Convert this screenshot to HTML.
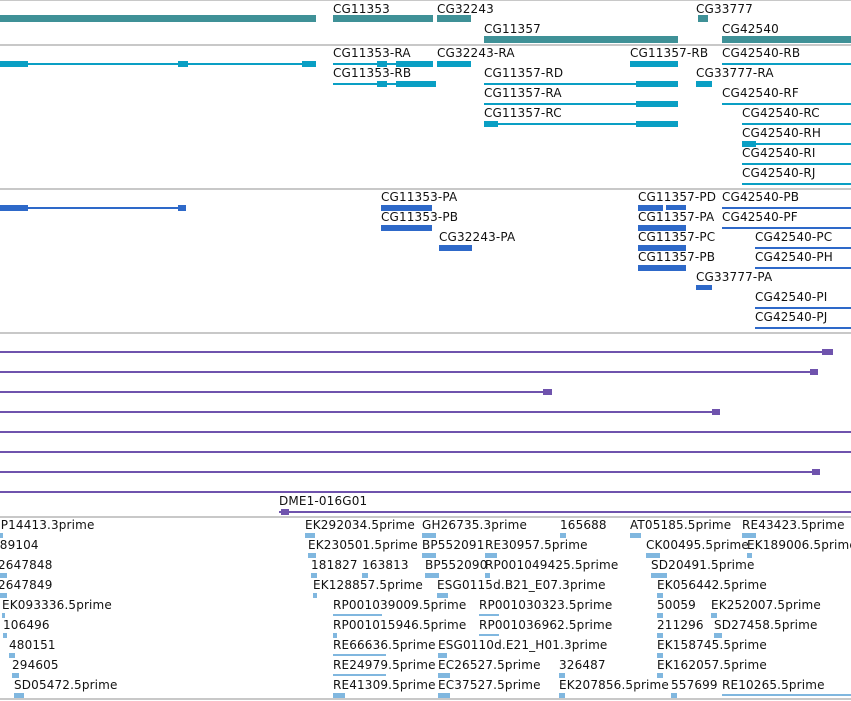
<!DOCTYPE html>
<html><head><meta charset="utf-8"><style>
body{margin:0;width:851px;height:701px;overflow:hidden;background:#fff;position:relative;font-family:"DejaVu Sans","Liberation Sans",sans-serif;}
div{position:absolute;}
.l{font-size:12px;line-height:14px;color:#111;white-space:nowrap;letter-spacing:0.15px;}
.s{left:0;width:851px;height:2px;background:#c8c8c8;}
.g{background:#3f9197;height:7px;}
.t{background:#0a9fc4;}
.p{background:#2e69c9;}
.v{background:#6f53ad;}
.e{background:#80b7df;}
</style></head><body>
<div class="s" style="top:0px;height:1px"></div>
<div class="s" style="top:44px"></div>
<div class="s" style="top:188px"></div>
<div class="s" style="top:332px"></div>
<div class="s" style="top:516px"></div>
<div class="s" style="top:698px"></div>

<div class="l" style="left:333px;top:2px">CG11353</div>
<div class="l" style="left:437px;top:2px">CG32243</div>
<div class="l" style="left:696px;top:2px">CG33777</div>
<div class="l" style="left:484px;top:22px">CG11357</div>
<div class="l" style="left:722px;top:22px">CG42540</div>
<div class="g" style="left:0;top:15px;width:316px"></div>
<div class="g" style="left:333px;top:15px;width:100px"></div>
<div class="g" style="left:437px;top:15px;width:34px"></div>
<div class="g" style="left:698px;top:15px;width:10px"></div>
<div class="g" style="left:484px;top:36px;width:194px"></div>
<div class="g" style="left:722px;top:36px;width:129px"></div>

<div class="t" style="left:0;top:61px;width:28px;height:6px"></div>
<div class="t" style="left:0;top:63px;width:316px;height:2px"></div>
<div class="t" style="left:178px;top:61px;width:10px;height:6px"></div>
<div class="t" style="left:302px;top:61px;width:14px;height:6px"></div>
<div class="l" style="left:333px;top:46px">CG11353-RA</div>
<div class="l" style="left:437px;top:46px">CG32243-RA</div>
<div class="l" style="left:630px;top:46px">CG11357-RB</div>
<div class="l" style="left:722px;top:46px">CG42540-RB</div>
<div class="t" style="left:333px;top:63px;width:100px;height:2px"></div>
<div class="t" style="left:377px;top:61px;width:10px;height:6px"></div>
<div class="t" style="left:396px;top:61px;width:37px;height:6px"></div>
<div class="t" style="left:437px;top:61px;width:34px;height:6px"></div>
<div class="t" style="left:630px;top:61px;width:48px;height:6px"></div>
<div class="t" style="left:722px;top:63px;width:129px;height:2px"></div>
<div class="l" style="left:333px;top:66px">CG11353-RB</div>
<div class="l" style="left:484px;top:66px">CG11357-RD</div>
<div class="l" style="left:696px;top:66px">CG33777-RA</div>
<div class="t" style="left:333px;top:83px;width:103px;height:2px"></div>
<div class="t" style="left:377px;top:81px;width:10px;height:6px"></div>
<div class="t" style="left:396px;top:81px;width:40px;height:6px"></div>
<div class="t" style="left:484px;top:83px;width:194px;height:2px"></div>
<div class="t" style="left:636px;top:81px;width:42px;height:6px"></div>
<div class="t" style="left:696px;top:81px;width:16px;height:6px"></div>
<div class="l" style="left:484px;top:86px">CG11357-RA</div>
<div class="l" style="left:722px;top:86px">CG42540-RF</div>
<div class="t" style="left:484px;top:103px;width:194px;height:2px"></div>
<div class="t" style="left:636px;top:101px;width:42px;height:6px"></div>
<div class="t" style="left:722px;top:103px;width:129px;height:2px"></div>
<div class="l" style="left:484px;top:106px">CG11357-RC</div>
<div class="l" style="left:742px;top:106px">CG42540-RC</div>
<div class="t" style="left:484px;top:123px;width:194px;height:2px"></div>
<div class="t" style="left:484px;top:121px;width:14px;height:6px"></div>
<div class="t" style="left:636px;top:121px;width:42px;height:6px"></div>
<div class="t" style="left:742px;top:123px;width:109px;height:2px"></div>
<div class="l" style="left:742px;top:126px">CG42540-RH</div>
<div class="t" style="left:742px;top:143px;width:109px;height:2px"></div>
<div class="t" style="left:742px;top:141px;width:14px;height:6px"></div>
<div class="l" style="left:742px;top:146px">CG42540-RI</div>
<div class="t" style="left:742px;top:163px;width:109px;height:2px"></div>
<div class="l" style="left:742px;top:166px">CG42540-RJ</div>
<div class="t" style="left:742px;top:183px;width:109px;height:2px"></div>

<div class="p" style="left:0;top:205px;width:28px;height:6px"></div>
<div class="p" style="left:0;top:207px;width:186px;height:2px"></div>
<div class="p" style="left:178px;top:205px;width:8px;height:6px"></div>
<div class="l" style="left:381px;top:190px">CG11353-PA</div>
<div class="l" style="left:638px;top:190px">CG11357-PD</div>
<div class="l" style="left:722px;top:190px">CG42540-PB</div>
<div class="p" style="left:381px;top:205px;width:51px;height:6px"></div>
<div class="p" style="left:638px;top:205px;width:25px;height:6px"></div>
<div class="p" style="left:666px;top:205px;width:20px;height:5px"></div>
<div class="p" style="left:722px;top:207px;width:129px;height:2px"></div>
<div class="l" style="left:381px;top:210px">CG11353-PB</div>
<div class="l" style="left:638px;top:210px">CG11357-PA</div>
<div class="l" style="left:722px;top:210px">CG42540-PF</div>
<div class="p" style="left:381px;top:225px;width:51px;height:6px"></div>
<div class="p" style="left:638px;top:225px;width:48px;height:6px"></div>
<div class="p" style="left:722px;top:227px;width:129px;height:2px"></div>
<div class="l" style="left:439px;top:230px">CG32243-PA</div>
<div class="l" style="left:638px;top:230px">CG11357-PC</div>
<div class="l" style="left:755px;top:230px">CG42540-PC</div>
<div class="p" style="left:439px;top:245px;width:33px;height:6px"></div>
<div class="p" style="left:638px;top:245px;width:48px;height:6px"></div>
<div class="p" style="left:755px;top:247px;width:96px;height:2px"></div>
<div class="l" style="left:638px;top:250px">CG11357-PB</div>
<div class="l" style="left:755px;top:250px">CG42540-PH</div>
<div class="p" style="left:638px;top:265px;width:48px;height:6px"></div>
<div class="p" style="left:755px;top:267px;width:96px;height:2px"></div>
<div class="l" style="left:696px;top:270px">CG33777-PA</div>
<div class="p" style="left:696px;top:285px;width:16px;height:5px"></div>
<div class="l" style="left:755px;top:290px">CG42540-PI</div>
<div class="p" style="left:755px;top:307px;width:96px;height:2px"></div>
<div class="l" style="left:755px;top:310px">CG42540-PJ</div>
<div class="p" style="left:755px;top:327px;width:96px;height:2px"></div>

<div class="v" style="left:0;top:351px;width:832px;height:2px"></div>
<div class="v" style="left:822px;top:349px;width:11px;height:6px"></div>
<div class="v" style="left:0;top:371px;width:818px;height:2px"></div>
<div class="v" style="left:810px;top:369px;width:8px;height:6px"></div>
<div class="v" style="left:0;top:391px;width:552px;height:2px"></div>
<div class="v" style="left:543px;top:389px;width:9px;height:6px"></div>
<div class="v" style="left:0;top:411px;width:720px;height:2px"></div>
<div class="v" style="left:712px;top:409px;width:8px;height:6px"></div>
<div class="v" style="left:0;top:431px;width:851px;height:2px"></div>
<div class="v" style="left:0;top:451px;width:851px;height:2px"></div>
<div class="v" style="left:0;top:471px;width:820px;height:2px"></div>
<div class="v" style="left:812px;top:469px;width:8px;height:6px"></div>
<div class="v" style="left:0;top:491px;width:851px;height:2px"></div>
<div class="l" style="left:279px;top:494px">DME1-016G01</div>
<div class="v" style="left:279px;top:511px;width:572px;height:2px"></div>
<div class="v" style="left:281px;top:509px;width:8px;height:6px"></div>

<div class="l" style="left:-7px;top:518px">EP14413.3prime</div>
<div class="l" style="left:305px;top:518px">EK292034.5prime</div>
<div class="l" style="left:422px;top:518px">GH26735.3prime</div>
<div class="l" style="left:560px;top:518px">165688</div>
<div class="l" style="left:630px;top:518px">AT05185.5prime</div>
<div class="l" style="left:742px;top:518px">RE43423.5prime</div>
<div class="e" style="left:0;top:533px;width:3px;height:5px"></div>
<div class="e" style="left:305px;top:533px;width:10px;height:5px"></div>
<div class="e" style="left:422px;top:533px;width:14px;height:5px"></div>
<div class="e" style="left:560px;top:533px;width:6px;height:5px"></div>
<div class="e" style="left:630px;top:533px;width:11px;height:5px"></div>
<div class="e" style="left:742px;top:533px;width:14px;height:5px"></div>

<div class="l" style="left:-8px;top:538px">489104</div>
<div class="l" style="left:308px;top:538px">EK230501.5prime</div>
<div class="l" style="left:422px;top:538px">BP552091</div>
<div class="l" style="left:485px;top:538px">RE30957.5prime</div>
<div class="l" style="left:646px;top:538px">CK00495.5prime</div>
<div class="l" style="left:747px;top:538px">EK189006.5prime</div>
<div class="e" style="left:308px;top:553px;width:8px;height:5px"></div>
<div class="e" style="left:422px;top:553px;width:14px;height:5px"></div>
<div class="e" style="left:485px;top:553px;width:12px;height:5px"></div>
<div class="e" style="left:646px;top:553px;width:14px;height:5px"></div>
<div class="e" style="left:747px;top:553px;width:5px;height:5px"></div>

<div class="l" style="left:-2px;top:558px">2647848</div>
<div class="l" style="left:311px;top:558px">181827</div>
<div class="l" style="left:362px;top:558px">163813</div>
<div class="l" style="left:425px;top:558px">BP552090</div>
<div class="l" style="left:485px;top:558px">RP001049425.5prime</div>
<div class="l" style="left:651px;top:558px">SD20491.5prime</div>
<div class="e" style="left:0;top:573px;width:7px;height:5px"></div>
<div class="e" style="left:311px;top:573px;width:6px;height:5px"></div>
<div class="e" style="left:362px;top:573px;width:6px;height:5px"></div>
<div class="e" style="left:425px;top:573px;width:14px;height:5px"></div>
<div class="e" style="left:485px;top:573px;width:5px;height:5px"></div>
<div class="e" style="left:651px;top:573px;width:16px;height:5px"></div>

<div class="l" style="left:-2px;top:578px">2647849</div>
<div class="l" style="left:313px;top:578px">EK128857.5prime</div>
<div class="l" style="left:437px;top:578px">ESG0115d.B21_E07.3prime</div>
<div class="l" style="left:657px;top:578px">EK056442.5prime</div>
<div class="e" style="left:0;top:593px;width:7px;height:5px"></div>
<div class="e" style="left:313px;top:593px;width:4px;height:5px"></div>
<div class="e" style="left:437px;top:593px;width:11px;height:5px"></div>
<div class="e" style="left:657px;top:593px;width:6px;height:5px"></div>

<div class="l" style="left:2px;top:598px">EK093336.5prime</div>
<div class="l" style="left:333px;top:598px">RP001039009.5prime</div>
<div class="l" style="left:479px;top:598px">RP001030323.5prime</div>
<div class="l" style="left:657px;top:598px">50059</div>
<div class="l" style="left:711px;top:598px">EK252007.5prime</div>
<div class="e" style="left:2px;top:613px;width:3px;height:5px"></div>
<div class="e" style="left:333px;top:614px;width:49px;height:2px"></div>
<div class="e" style="left:479px;top:614px;width:20px;height:2px"></div>
<div class="e" style="left:657px;top:613px;width:6px;height:5px"></div>
<div class="e" style="left:711px;top:613px;width:6px;height:5px"></div>

<div class="l" style="left:3px;top:618px">106496</div>
<div class="l" style="left:333px;top:618px">RP001015946.5prime</div>
<div class="l" style="left:479px;top:618px">RP001036962.5prime</div>
<div class="l" style="left:657px;top:618px">211296</div>
<div class="l" style="left:714px;top:618px">SD27458.5prime</div>
<div class="e" style="left:3px;top:633px;width:4px;height:5px"></div>
<div class="e" style="left:333px;top:633px;width:4px;height:5px"></div>
<div class="e" style="left:479px;top:634px;width:20px;height:2px"></div>
<div class="e" style="left:657px;top:633px;width:6px;height:5px"></div>
<div class="e" style="left:714px;top:633px;width:8px;height:5px"></div>

<div class="l" style="left:9px;top:638px">480151</div>
<div class="l" style="left:333px;top:638px">RE66636.5prime</div>
<div class="l" style="left:438px;top:638px">ESG0110d.E21_H01.3prime</div>
<div class="l" style="left:657px;top:638px">EK158745.5prime</div>
<div class="e" style="left:9px;top:653px;width:6px;height:5px"></div>
<div class="e" style="left:333px;top:654px;width:53px;height:2px"></div>
<div class="e" style="left:438px;top:653px;width:9px;height:5px"></div>
<div class="e" style="left:657px;top:653px;width:6px;height:5px"></div>

<div class="l" style="left:12px;top:658px">294605</div>
<div class="l" style="left:333px;top:658px">RE24979.5prime</div>
<div class="l" style="left:438px;top:658px">EC26527.5prime</div>
<div class="l" style="left:559px;top:658px">326487</div>
<div class="l" style="left:657px;top:658px">EK162057.5prime</div>
<div class="e" style="left:12px;top:673px;width:7px;height:5px"></div>
<div class="e" style="left:333px;top:674px;width:53px;height:2px"></div>
<div class="e" style="left:438px;top:673px;width:12px;height:5px"></div>
<div class="e" style="left:559px;top:673px;width:6px;height:5px"></div>
<div class="e" style="left:657px;top:673px;width:6px;height:5px"></div>

<div class="l" style="left:14px;top:678px">SD05472.5prime</div>
<div class="l" style="left:333px;top:678px">RE41309.5prime</div>
<div class="l" style="left:438px;top:678px">EC37527.5prime</div>
<div class="l" style="left:559px;top:678px">EK207856.5prime</div>
<div class="l" style="left:671px;top:678px">557699</div>
<div class="l" style="left:722px;top:678px">RE10265.5prime</div>
<div class="e" style="left:14px;top:693px;width:10px;height:5px"></div>
<div class="e" style="left:333px;top:693px;width:12px;height:5px"></div>
<div class="e" style="left:438px;top:693px;width:12px;height:5px"></div>
<div class="e" style="left:559px;top:693px;width:6px;height:5px"></div>
<div class="e" style="left:671px;top:693px;width:6px;height:5px"></div>
<div class="e" style="left:722px;top:694px;width:129px;height:2px"></div>
</body></html>
